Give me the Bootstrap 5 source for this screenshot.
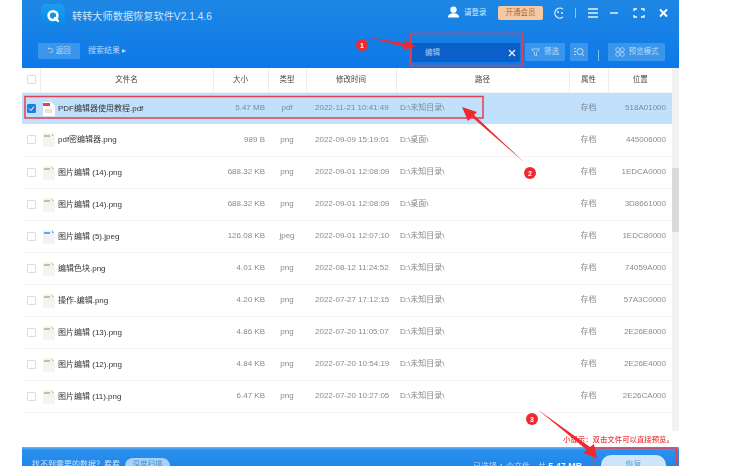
<!DOCTYPE html>
<html lang="zh"><head><meta charset="utf-8"><title>转转大师数据恢复软件</title>
<link href="https://cdn.jsdelivr.net/npm/bootstrap@5.3.0/dist/css/bootstrap.min.css" rel="stylesheet">
<style>
html,body{height:466px;overflow:hidden;background:#fff}
body{font-family:"Liberation Sans","Noto Sans CJK SC",sans-serif;font-size:8px;color:#666;position:relative}
.win{margin-left:22px;width:657px;height:466px;filter:blur(.55px)}
.tophead{height:68px;background:linear-gradient(#1e87e4,#0d79e8);color:#d3e8fb}
.titlerow{height:33px;padding-left:19px}
.applogo{width:24px;height:23px;margin-top:-2px;border-radius:5px;background:linear-gradient(#1b9df2,#0a86e6);flex:none}
.apptitle{font-size:10.2px;margin-left:7px;color:#cfe4f8}
.rightcluster{margin-left:auto;width:232px;height:100%;position:relative}
.hbtn{background:#3a96ec;color:#b9daf8;border-radius:1px;height:18px;font-size:7.5px}
.toolrow{height:35px;padding:10px 14px 0 16px}
.backbtn{width:42px;height:16px}
.crumb{margin-left:8px;font-size:8px;color:#b9daf8;line-height:16px}
.searchbox{width:108px;height:19px;margin-left:auto;background:#0a5fc8;padding:0 4px 0 13px;font-size:7.5px;color:#a9cdf2;margin-right:5px}
.filt{width:40px}.icn{width:18px;margin-left:5px}.vline{width:1px;height:11px;background:#7fbcf2;margin:0 9px 0 10px}.prev{width:57px}
.vipbtn{position:absolute;left:51px;top:6px;width:45px;height:14px;background:#f5c9a3;color:#b06a30;border-radius:2px;font-size:7.5px;line-height:14px;text-align:center}
.loginlabel{position:absolute;left:17px;top:7px;font-size:7.5px;color:#d3e8fb;line-height:12px}
.listarea{height:379px;position:relative}
.filetable{width:650px;table-layout:fixed;margin:0;font-size:8px;--bs-table-bg:transparent;border-collapse:collapse}
.filetable th{height:24px;padding:0;font-weight:400;font-size:7.5px;color:#444;text-align:center;border-bottom:1px solid #f1f1f1;border-right:1px solid #ececec;vertical-align:middle}
.filetable th:last-child{border-right:0}
.filetable td{height:32px;padding:0;border-bottom:1px solid #f6f6f6;color:#8a8a8a;vertical-align:middle;white-space:nowrap;overflow:hidden}
.filetable tr.picked td{background:#c1e0fb;color:#7d8a96;border-bottom:0}
.filetable td.fname,.filetable tr.picked td.fname{color:#333;font-size:8px;padding-left:3px}
.tickbox{display:block;width:9px;height:9px;margin-left:5px;border:1px solid #ddd;border-radius:1px;background:#fff}
.tickbox.on{background:#1b80e0;border-color:#1b80e0;position:relative}
.docicon{display:inline-block;vertical-align:middle;margin-right:3px}
.ralign{text-align:right;padding-right:3px !important}
.calign{text-align:center}
.pos{text-align:right;padding-right:6px !important}
.timecol{padding-left:9px !important}
.pathcol{padding-left:4px !important}
.strack{position:absolute;right:0;top:0;width:7px;height:363px;background:#f1f1f1}
.sthumb{position:absolute;left:0;top:100px;width:7px;height:64px;background:#d9d9d9}
.hinttext{position:absolute;left:541px;top:366px;color:#ee3a3a;font-size:7.4px;line-height:12px;white-space:nowrap;font-weight:500}
.footbar{height:19px;background:linear-gradient(#6cb6f3 0,#2c90ee 3px,#1f87e8);color:#cfe6fb;padding-left:10px;font-size:8px;position:relative}
.fleft{padding-top:12px;line-height:12px}
.deep{margin-left:5px;width:45px;height:16px;margin-top:11px;background:#a8d2f7;border-radius:8px;color:#3b8fdc;text-align:center;line-height:14px;font-size:7.5px}
.sumtext{position:absolute;left:451px;top:13px;color:#b8d9f7;line-height:12px;white-space:nowrap}
.sumtext b{color:#eaf4fd;font-size:9px}
.recbtn{position:absolute;left:579px;top:8px;width:65px;height:22px;background:#cde5fa;border-radius:10px;color:#5aa3e6;text-align:center;line-height:20px}
.marks{position:absolute;left:0;top:0;width:750px;height:466px;pointer-events:none;filter:blur(.3px)}
.marks text{font:700 7px "Liberation Sans",sans-serif;fill:#fff;text-anchor:middle}
</style></head><body>
<div class="win d-flex flex-column">
 <header class="tophead">
  <div class="titlerow d-flex align-items-center">
   <span class="applogo d-flex align-items-center justify-content-center"><svg width="16" height="16" viewBox="0 0 16 16"><circle cx="8" cy="7.6" r="4.4" fill="none" stroke="#fff" stroke-width="2.6"/><path d="M10 10l3 3" stroke="#fff" stroke-width="2.4" stroke-linecap="round"/></svg></span>
   <span class="apptitle">转转大师数据恢复软件V2.1.4.6</span>
   <div class="rightcluster">
    <svg class="position-absolute" style="left:0;top:6px" width="13" height="13" viewBox="0 0 14 14"><circle cx="7" cy="4" r="3.4" fill="#fff"/><path d="M1 12.500c0-3.400 3-4.600 6-4.600s6 1.200 6 4.600z" fill="#fff"/></svg>
    <span class="loginlabel">请登录</span>
    <span class="vipbtn">开通会员</span>
    <svg class="position-absolute" style="left:106px;top:6px" width="120" height="14" viewBox="0 0 120 14"><path d="M10 3.200A5 5 0 1 0 10 11" fill="none" stroke="#d8ebfb" stroke-width="1.300"/><circle cx="5" cy="6" r="1" fill="#d8ebfb"/><circle cx="9" cy="7" r="1" fill="#d8ebfb"/><path d="M22.500 2v10" stroke="#8fc4f2"/><path d="M35 3h10M35 7h10M35 11h10" stroke="#e6f2fc" stroke-width="1.300"/><path d="M57 7h8" stroke="#e6f2fc" stroke-width="1.500"/><path d="M81 5V3h3M88 3h3v2M91 9v2h-3M84 11h-3V9" fill="none" stroke="#fff" stroke-width="1.300"/><path d="M107 3.500l7 7M114 3.500l-7 7" stroke="#fff" stroke-width="1.900"/></svg>
   </div>
  </div>
  <div class="toolrow d-flex">
   <span class="hbtn backbtn d-flex align-items-center justify-content-center">⮌ 返回</span>
   <span class="crumb">搜索结果 ▸</span>
   <div class="searchbox d-flex align-items-center justify-content-between"><span>编辑</span><svg width="8" height="8" viewBox="0 0 8 8"><path d="M1 1l6 6M7 1L1 7" stroke="#e8f2fc" stroke-width="1.400"/></svg></div>
   <span class="hbtn filt d-flex align-items-center justify-content-center gap-1"><svg width="9" height="9" viewBox="0 0 9 9"><path d="M.5 1h8L5.500 4.500V8L3.500 7V4.500z" fill="none" stroke="#b9daf8" stroke-width=".8"/></svg>筛选</span>
   <span class="hbtn icn d-flex align-items-center justify-content-center"><svg width="11" height="10" viewBox="0 0 11 10"><circle cx="6" cy="4.500" r="3" fill="none" stroke="#b9daf8"/><path d="M8 7l2 2M0 1.500h2M0 4.500h2M0 7.500h2" stroke="#b9daf8"/></svg></span>
   <span class="vline align-self-center"></span>
   <span class="hbtn prev d-flex align-items-center justify-content-center gap-1"><svg width="10" height="10" viewBox="0 0 10 10" fill="none" stroke="#b9daf8" stroke-width=".8"><circle cx="2.700" cy="2.700" r="2"/><circle cx="7.300" cy="2.700" r="2"/><circle cx="2.700" cy="7.300" r="2"/><circle cx="7.300" cy="7.300" r="2"/></svg>预览模式</span>
  </div>
 </header>
 <main class="listarea">
  <table class="table filetable">
   <colgroup><col style="width:18px"><col style="width:173px"><col style="width:55px"><col style="width:38px"><col style="width:90px"><col style="width:173px"><col style="width:39px"><col style="width:64px"></colgroup>
   <thead><tr><th><span class="tickbox"></span></th><th>文件名</th><th>大小</th><th>类型</th><th>修改时间</th><th>路径</th><th>属性</th><th>位置</th></tr></thead>
   <tbody>
   <tr class="picked"><td><span class="tickbox on"><svg class="d-block" width="7" height="7" viewBox="0 0 7 7"><path d="M1 3.500l2 2 3-4" fill="none" stroke="#fff"/></svg></span></td><td class="fname"><svg class="docicon" width="12" height="15" viewBox="0 0 12 15"><path d="M0 1h8l4 4v10H0z" fill="#fff"/><path d="M0 2h7v3H0z" fill="#e8404a"/><path d="M2 9h7M2 11h7" stroke="#eba"/></svg>PDF编辑器使用教程.pdf</td><td class="ralign">5.47 MB</td><td class="calign">pdf</td><td class="timecol">2022-11-21 10:41:49</td><td class="pathcol">D:\未知目录\</td><td class="calign">存档</td><td class="pos">518A01000</td></tr>
   <tr><td><span class="tickbox"></span></td><td class="fname"><svg class="docicon" width="12" height="15" viewBox="0 0 12 15"><path d="M0 1h8l4 4v10H0z" fill="#f3f5f1"/><path d="M1 3h6v2H1zM9 1l2 3H9z" fill="#a9d095"/></svg>pdf密编辑器.png</td><td class="ralign">989 B</td><td class="calign">png</td><td class="timecol">2022-09-09 15:19:01</td><td class="pathcol">D:\桌面\</td><td class="calign">存档</td><td class="pos">445006000</td></tr>
   <tr><td><span class="tickbox"></span></td><td class="fname"><svg class="docicon" width="12" height="15" viewBox="0 0 12 15"><path d="M0 1h8l4 4v10H0z" fill="#f3f5f1"/><path d="M1 3h6v2H1zM9 1l2 3H9z" fill="#a9d095"/></svg>图片编辑 (14).png</td><td class="ralign">688.32 KB</td><td class="calign">png</td><td class="timecol">2022-09-01 12:08:09</td><td class="pathcol">D:\未知目录\</td><td class="calign">存档</td><td class="pos">1EDCA0000</td></tr>
   <tr><td><span class="tickbox"></span></td><td class="fname"><svg class="docicon" width="12" height="15" viewBox="0 0 12 15"><path d="M0 1h8l4 4v10H0z" fill="#f3f5f1"/><path d="M1 3h6v2H1zM9 1l2 3H9z" fill="#a9d095"/></svg>图片编辑 (14).png</td><td class="ralign">688.32 KB</td><td class="calign">png</td><td class="timecol">2022-09-01 12:08:09</td><td class="pathcol">D:\桌面\</td><td class="calign">存档</td><td class="pos">3D8661000</td></tr>
   <tr><td><span class="tickbox"></span></td><td class="fname"><svg class="docicon" width="12" height="15" viewBox="0 0 12 15"><path d="M0 1h8l4 4v10H0z" fill="#eff3f9"/><path d="M1 3h6v2H1zM9 1l2 3H9z" fill="#6aa5e2"/></svg>图片编辑 (5).jpeg</td><td class="ralign">126.08 KB</td><td class="calign">jpeg</td><td class="timecol">2022-09-01 12:07:10</td><td class="pathcol">D:\未知目录\</td><td class="calign">存档</td><td class="pos">1EDC80000</td></tr>
   <tr><td><span class="tickbox"></span></td><td class="fname"><svg class="docicon" width="12" height="15" viewBox="0 0 12 15"><path d="M0 1h8l4 4v10H0z" fill="#f3f5f1"/><path d="M1 3h6v2H1zM9 1l2 3H9z" fill="#a9d095"/></svg>编辑色块.png</td><td class="ralign">4.01 KB</td><td class="calign">png</td><td class="timecol">2022-08-12 11:24:52</td><td class="pathcol">D:\未知目录\</td><td class="calign">存档</td><td class="pos">74059A000</td></tr>
   <tr><td><span class="tickbox"></span></td><td class="fname"><svg class="docicon" width="12" height="15" viewBox="0 0 12 15"><path d="M0 1h8l4 4v10H0z" fill="#f3f5f1"/><path d="M1 3h6v2H1zM9 1l2 3H9z" fill="#a9d095"/></svg>操作-编辑.png</td><td class="ralign">4.20 KB</td><td class="calign">png</td><td class="timecol">2022-07-27 17:12:15</td><td class="pathcol">D:\未知目录\</td><td class="calign">存档</td><td class="pos">57A3C0000</td></tr>
   <tr><td><span class="tickbox"></span></td><td class="fname"><svg class="docicon" width="12" height="15" viewBox="0 0 12 15"><path d="M0 1h8l4 4v10H0z" fill="#f3f5f1"/><path d="M1 3h6v2H1zM9 1l2 3H9z" fill="#a9d095"/></svg>图片编辑 (13).png</td><td class="ralign">4.86 KB</td><td class="calign">png</td><td class="timecol">2022-07-20 11:05:07</td><td class="pathcol">D:\未知目录\</td><td class="calign">存档</td><td class="pos">2E26E8000</td></tr>
   <tr><td><span class="tickbox"></span></td><td class="fname"><svg class="docicon" width="12" height="15" viewBox="0 0 12 15"><path d="M0 1h8l4 4v10H0z" fill="#f3f5f1"/><path d="M1 3h6v2H1zM9 1l2 3H9z" fill="#a9d095"/></svg>图片编辑 (12).png</td><td class="ralign">4.84 KB</td><td class="calign">png</td><td class="timecol">2022-07-20 10:54:19</td><td class="pathcol">D:\未知目录\</td><td class="calign">存档</td><td class="pos">2E26E4000</td></tr>
   <tr><td><span class="tickbox"></span></td><td class="fname"><svg class="docicon" width="12" height="15" viewBox="0 0 12 15"><path d="M0 1h8l4 4v10H0z" fill="#f3f5f1"/><path d="M1 3h6v2H1zM9 1l2 3H9z" fill="#a9d095"/></svg>图片编辑 (11).png</td><td class="ralign">6.47 KB</td><td class="calign">png</td><td class="timecol">2022-07-20 10:27:05</td><td class="pathcol">D:\未知目录\</td><td class="calign">存档</td><td class="pos">2E26CA000</td></tr>
   </tbody>
  </table>
  <div class="strack"><div class="sthumb"></div></div>
  <span class="hinttext">小提示：双击文件可以直接预览。</span>
 </main>
 <footer class="footbar d-flex align-items-start">
  <span class="fleft">找不到需要的数据？看看</span><span class="deep">深度扫描</span>
  <span class="sumtext">已选择 1 个文件，共 <b>5.47 MB</b></span>
  <span class="recbtn">恢复</span>
 </footer>
</div>
<svg class="marks" viewBox="0 0 750 466">
 <g fill="none" stroke="#e0404f" stroke-width="1.500">
  <rect x="410.500" y="33.500" width="112" height="32"/>
  <rect x="25" y="96.500" width="458" height="21.500"/>
  <rect x="593.500" y="448" width="83" height="20"/>
 </g>
 <g fill="#ee2a30">
  <path d="M368 37L405 43.500L404 40L416 46L403 50L404 47z"/>
  <path d="M525 163L472 117L468 121L462 107L477 112L474 115z"/>
  <path d="M537 409L590 447L594 444L597 458L583 453L587 450z"/>
  <circle cx="362" cy="45" r="6"/>
  <circle cx="530" cy="173" r="6"/>
  <circle cx="532" cy="419" r="6"/>
 </g>
 <text x="362" y="47.500">1</text><text x="530" y="175.500">2</text><text x="532" y="421.500">3</text>
</svg>
<script src="https://cdn.jsdelivr.net/npm/bootstrap@5.3.0/dist/js/bootstrap.bundle.min.js"></script>
</body></html>
